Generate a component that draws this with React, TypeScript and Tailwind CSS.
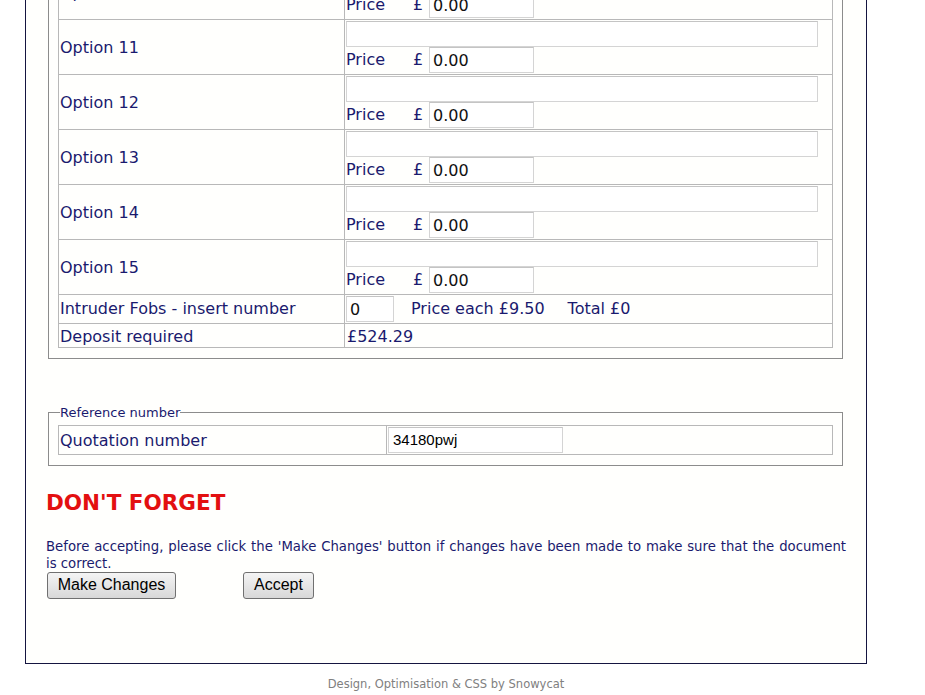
const navy = "text-[#1a1a6e]";

function PriceLine() {
  return (
    <div className="flex items-center h-[26px]">
      <span className="w-[67px]">Price</span>
      <span className="w-[16px]">£</span>
      <input
        readOnly
        value="0.00"
        className="w-[105px] h-[26px] border border-[#d4d4d4] border-t-[#c4c4c4] bg-white px-[3px] text-[#111] outline-none"
      />
    </div>
  );
}

function OptionRow({ n }: { n: number }) {
  return (
    <tr>
      <td className="border border-[#b8b8b8] pl-[1px] pt-[2px] w-[286px] align-middle">
        Option {n}
      </td>
      <td className="border border-[#b8b8b8] p-[1px]">
        <input
          readOnly
          value=""
          className="block w-[472px] h-[26px] border border-[#d4d4d4] border-t-[#c4c4c4] bg-white outline-none"
        />
        <PriceLine />
      </td>
    </tr>
  );
}

function Button({ label, w }: { label: string; w: string }) {
  return (
    <button
      type="button"
      className={`${w} h-[27px] rounded-[3px] border border-[#707070] bg-gradient-to-b from-[#f4f4f4] to-[#d8d8d8] text-[16px] text-black font-['Liberation_Sans',Arial,sans-serif]`}
    >
      {label}
    </button>
  );
}

export default function App() {
  return (
    <div
      className={`w-[925px] h-[695px] overflow-hidden bg-white ${navy} font-['DejaVu_Sans',Verdana,sans-serif]`}
    >
      {/* page box, top scrolled out of view */}
      <div className="ml-[25px] -mt-[47px] w-[842px] h-[711px] border border-[#151540] bg-[#fffffd] text-[16px]">
        <fieldset className="ml-[22px] w-[795px] border border-[#8c8c8c] px-[9px] pt-[9px] pb-[10px]">
          <table className="w-[775px] border-collapse">
            <tbody>
              {[10, 11, 12, 13, 14, 15].map((n) => (
                <OptionRow key={n} n={n} />
              ))}
              <tr>
                <td className="border border-[#b8b8b8] pl-[1px] h-[29px]">
                  Intruder Fobs - insert number
                </td>
                <td className="border border-[#b8b8b8] p-[1px]">
                  <div className="flex items-center">
                    <input
                      readOnly
                      value="0"
                      className="w-[48px] h-[26px] border border-[#d4d4d4] border-t-[#c4c4c4] bg-white px-[3px] text-[#111] outline-none"
                    />
                    <span className="ml-[17px]">Price each £9.50</span>
                    <span className="ml-[23px]">Total £0</span>
                  </div>
                </td>
              </tr>
              <tr>
                <td className="border border-[#b8b8b8] pl-[1px] pt-[2px] h-[24px] leading-[20px]">
                  Deposit required
                </td>
                <td className="border border-[#b8b8b8] pl-[2px] pt-[2px] leading-[20px]">
                  £524.29
                </td>
              </tr>
            </tbody>
          </table>
        </fieldset>

        <fieldset className="ml-[22px] mt-[44px] w-[795px] border border-[#8c8c8c] px-[9px] pt-[2px] pb-[10px]">
          <legend className="ml-[2px] text-[13px]">Reference number</legend>
          <table className="w-[775px] border-collapse">
            <tbody>
              <tr>
                <td className="border border-[#b8b8b8] pl-[1px] pt-[2px] w-[328px] h-[29px]">
                  Quotation number
                </td>
                <td className="border border-[#b8b8b8] p-[1px]">
                  <input
                    readOnly
                    value="34180pwj"
                    className="block w-[175px] h-[26px] border border-[#d4d4d4] border-t-[#c4c4c4] bg-white px-[4px] text-[15px] text-black font-['Liberation_Sans',Arial,sans-serif] outline-none"
                  />
                </td>
              </tr>
            </tbody>
          </table>
        </fieldset>

        <h2 className="ml-[20px] mt-[23px] text-[21.5px] leading-[28px] font-bold text-[#e31010]">
          DON'T FORGET
        </h2>

        <p className="ml-[20px] mr-[20px] mt-[21px] text-[13.25px] leading-[17px] text-justify">
          Before accepting, please click the 'Make Changes' button if changes have been made
          to make sure that the document is correct.
        </p>

        <div className="ml-[21px] mt-[0px] flex gap-[67px]">
          <Button label="Make Changes" w="w-[129px]" />
          <Button label="Accept" w="w-[71px]" />
        </div>
      </div>

      <p className="mt-[12px] w-[892px] text-center text-[11.5px] text-[#808080]">
        Design, Optimisation &amp; CSS by Snowycat
      </p>
    </div>
  );
}
